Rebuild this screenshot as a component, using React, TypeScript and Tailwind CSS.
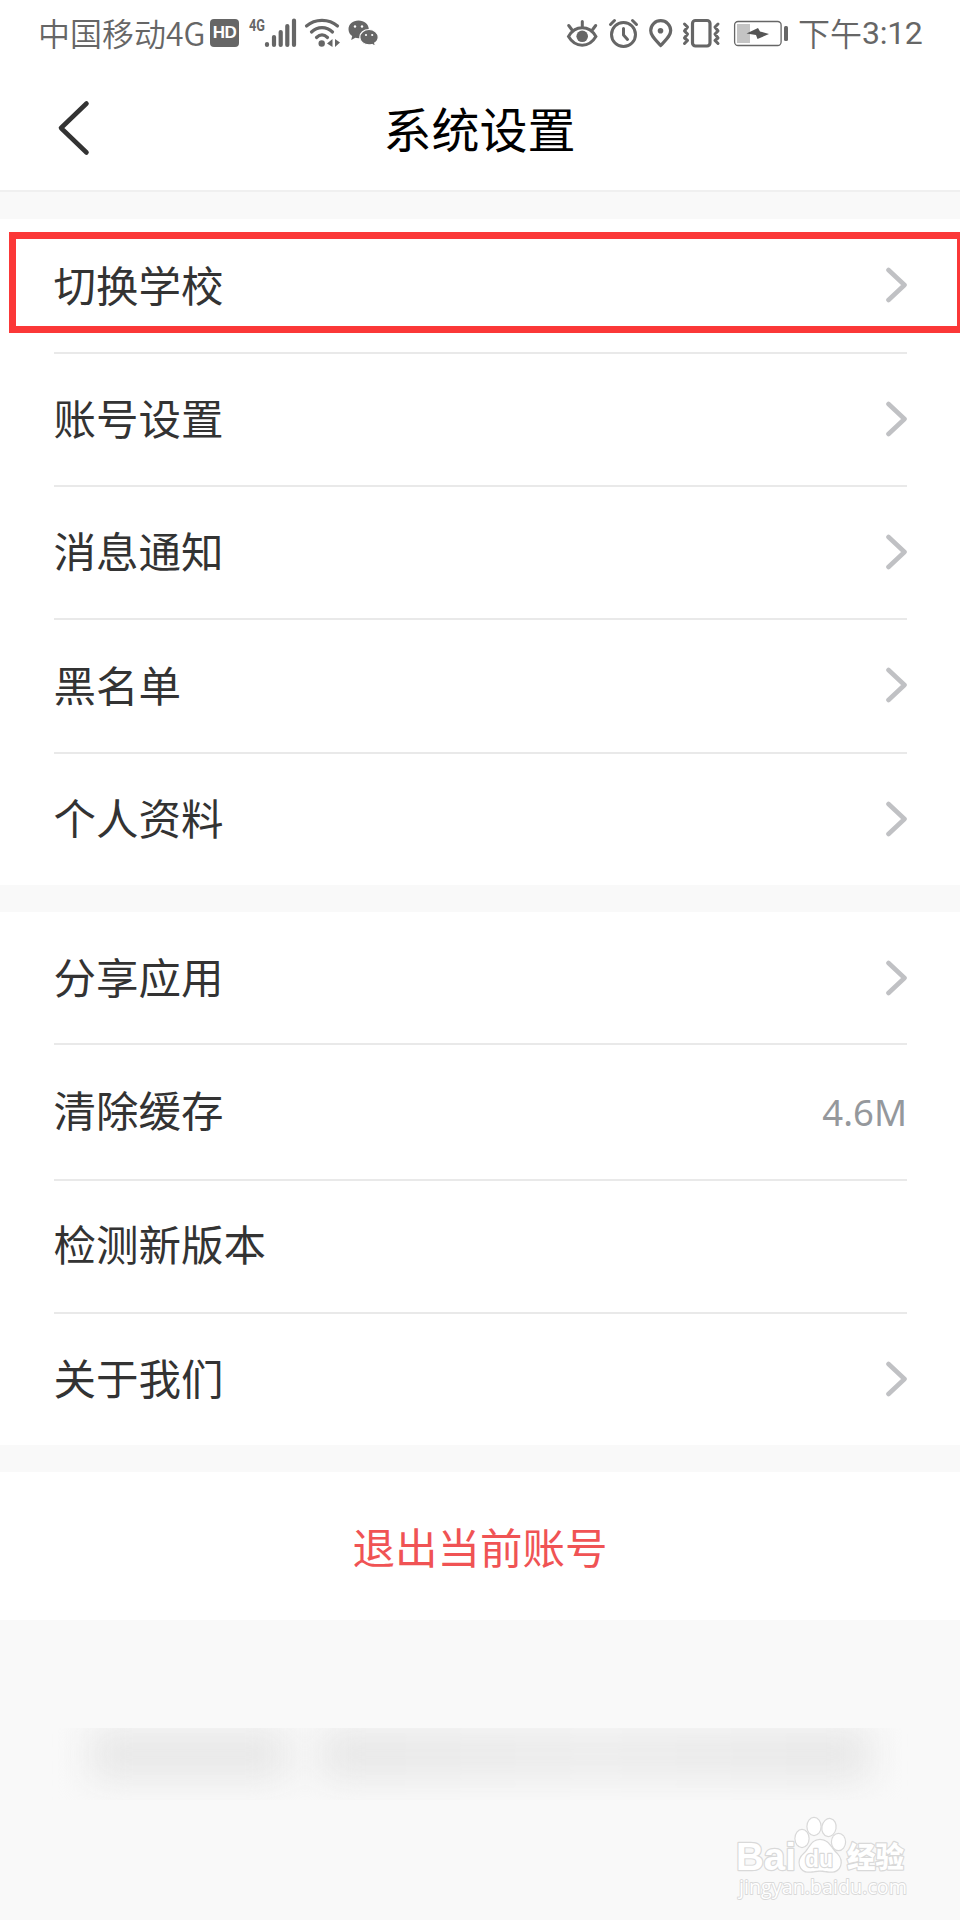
import type { ReactNode } from 'react';

interface Item {
  label: string;
  value?: string;
  arrow?: boolean;
  height: string;
}

const accountItems: Item[] = [
  { label: '切换学校', arrow: true, height: 'h-[135px] pb-px' },
  { label: '账号设置', arrow: true, height: 'h-[133px] pb-[2px]' },
  { label: '消息通知', arrow: true, height: 'h-[133px] pb-[2px]' },
  { label: '黑名单', arrow: true, height: 'h-[134px] pb-[2px]' },
  { label: '个人资料', arrow: true, height: 'h-[131px] pb-[2px]' },
];

const appItems: Item[] = [
  { label: '分享应用', arrow: true, height: 'h-[133px]' },
  { label: '清除缓存', value: '4.6M', height: 'h-[136px] pb-[3px]' },
  { label: '检测新版本', height: 'h-[133px] pb-[4px]' },
  { label: '关于我们', arrow: true, height: 'h-[131px] pb-[2px]' },
];

function StatusBar() {
  return (
    <div className="flex h-16 items-start justify-between pl-[38px] pr-[37px] pt-[17px] text-[#666]">
      <div className="flex h-[32px] items-center">
        <span className="-mt-[3px] w-[172px] whitespace-nowrap text-[32px] font-[350] leading-[32px]">中国移动4G</span>
        {/* HD badge */}
        <span className="flex h-[28px] w-[29px] items-center justify-center rounded-[4px] bg-[#666] font-['Liberation_Sans',sans-serif] text-[17px] font-bold leading-[28px] tracking-[-0.5px] text-white">
          HD
        </span>
        {/* signal */}
        <svg className="ml-[9px]" width="50" height="32" viewBox="248 16 50 32">
          <text x="249" y="30" fontSize="17" fontWeight="700" textLength="16" lengthAdjust="spacingAndGlyphs" fill="#666" className="font-[Roboto,sans-serif]">4G</text>
          <g stroke="#666" strokeWidth="4.2" strokeLinecap="round">
            <path d="M267 43v1M274 36v8M280.700 31v13M287.300 25v19M294 19.500V44" />
          </g>
        </svg>
        {/* wifi */}
        <svg className="ml-[6px]" width="38" height="32" viewBox="304 16 38 32">
          <g fill="none" stroke="#666" strokeWidth="3.200" strokeLinecap="round">
            <path d="M306.500 25c8.500-7.500 22.500-7.500 31 0M311.500 31c6-5.800 15-5.800 21 0M316.500 36.500c3.500-3.300 7.500-3.300 11 0" />
          </g>
          <circle cx="321.700" cy="42.500" r="3.200" fill="#666" />
          <path d="M327 42.500l5.500-4.500v8zM335 38v8l5-4.500z" fill="#666" />
        </svg>
        {/* wechat */}
        <svg className="ml-[6px]" width="31" height="32" viewBox="348 16 31 32">
          <path d="M358.500 19.500c-5.800 0-10 3.900-10 8.800 0 2.900 1.400 5.200 3.700 6.800l-1 4 4.200-2.300c1 .3 2 .4 3.100.4 5.800 0 10.300-4 10.300-8.900s-4.500-8.800-10.300-8.800z" fill="#666" />
          <path d="M369 28.500c-5.200 0-9.200 3.400-9.200 7.700s4 7.700 9.200 7.700c1 0 2-.1 3-.4l3.600 2-.9-3.400c2.200-1.400 3.500-3.500 3.500-5.900 0-4.300-4-7.700-9.200-7.700z" fill="#666" stroke="#fff" strokeWidth="1.200" />
          <g fill="#fff">
            <circle cx="355" cy="25.500" r="1.200" />
            <circle cx="362" cy="25.500" r="1.200" />
            <circle cx="366" cy="34" r="1.100" />
            <circle cx="372.200" cy="34" r="1.100" />
          </g>
        </svg>
      </div>

      <div className="flex h-[32px] items-center">
        {/* eye comfort */}
        <svg width="34" height="32" viewBox="566 16 34 32">
          <g fill="none" stroke="#666" strokeWidth="3" strokeLinecap="round">
            <path d="M568.500 35.500c3.500-6 8.500-8.700 13.700-8.700s10.200 2.700 13.700 8.700c-3.500 6-8.500 8.700-13.700 8.700s-10.200-2.700-13.700-8.700zM582.300 20.500v5M568.700 24.500l3 4M595.700 24.500l-3 4" />
          </g>
          <circle cx="582.200" cy="35.300" r="5.800" fill="#666" />
        </svg>
        {/* alarm */}
        <svg className="ml-[8px]" width="31" height="32" viewBox="608 16 31 32">
          <g fill="none" stroke="#666" strokeWidth="3" strokeLinecap="round" strokeLinejoin="round">
            <circle cx="623.500" cy="33.500" r="12" />
            <path d="M623.500 27.500v6.500l4 4.500M610.500 23.500l4-4M636.500 23.500l-4-4" />
          </g>
        </svg>
        {/* location */}
        <svg className="ml-[9px]" width="26" height="32" viewBox="648 16 26 32">
          <path d="M660.700 44.500c-5-5.500-10-9.500-10-15 0-5.500 4.500-9.800 10-9.800s10 4.300 10 9.800c0 5.500-5 9.500-10 15z" fill="none" stroke="#666" strokeWidth="3.200" strokeLinejoin="round" />
          <circle cx="660.500" cy="29.700" r="2.800" fill="#666" />
        </svg>
        {/* vibrate */}
        <svg className="ml-[8px]" width="40" height="32" viewBox="682 16 40 32">
          <g fill="none" stroke="#666" strokeLinecap="round" strokeLinejoin="round">
            <rect x="692.500" y="19.500" width="17.500" height="25.500" rx="3" strokeWidth="3.200" />
            <path d="M684.500 23l3 3-3 4 3 3-3 4 3 2.500-3 3M718 23l-3 3 3 4-3 3 3 4-3 2.500 3 3" strokeWidth="3" />
          </g>
        </svg>
        {/* battery, charging */}
        <svg className="ml-[11px]" width="57" height="32" viewBox="733 16 57 32">
          <rect x="734.600" y="20.500" width="46.500" height="24" rx="3.500" fill="none" stroke="#666" strokeWidth="1.300" />
          <rect x="737" y="23" width="13" height="19" fill="#c4c4c4" />
          <path d="M746.500 32.500l11.500-5.500 2 3.500 9 2.500-11.500 5-1.500-4z" fill="#555" />
          <rect x="784" y="25" width="4" height="15" rx="1.500" fill="#666" />
        </svg>
        <span className="-mt-[3px] ml-[8px] flex w-[125px] items-center whitespace-nowrap text-[32px] font-[350] leading-[32px]">
          下午<span className="mt-[3px] font-[Roboto,sans-serif] font-normal tracking-[-0.3px]">3:12</span>
        </span>
      </div>
    </div>
  );
}

function Arrow() {
  return (
    <svg width="22" height="36" viewBox="0 0 22 36">
      <path d="M3.500 3l16 15-16 15" fill="none" stroke="#c0c1c4" strokeWidth="4.600" strokeLinecap="round" strokeLinejoin="round" />
    </svg>
  );
}

function Row({ item, last }: { item: Item; last: boolean }) {
  return (
    <div className={`flex items-center justify-between ${item.height} ${last ? '' : 'border-b-2 border-[#e9e9e9]'}`}>
      <span className="pb-[3px] text-[42.5px] leading-[60px] text-[#333]">{item.label}</span>
      {item.value && (
        <span className="pt-[4px] font-['Noto_Sans',sans-serif] text-[36.5px] text-[#95989c]">{item.value}</span>
      )}
      {item.arrow && <Arrow />}
    </div>
  );
}

function Group({ items, children }: { items: Item[]; children?: ReactNode }) {
  return (
    <section className="relative bg-white pl-[53.5px] pr-[53px]">
      {items.map((item, i) => (
        <Row key={item.label} item={item} last={i === items.length - 1} />
      ))}
      {children}
    </section>
  );
}

function Watermark() {
  return (
    <svg className="absolute bottom-[14px] right-[46px]" width="184" height="94" viewBox="730 1812 184 94">
      <g fill="#fff" stroke="#d9d9d9" strokeWidth="2.400" paintOrder="stroke" strokeLinejoin="round">
        <text x="736" y="1870" fontSize="38" fontWeight="700" textLength="60" lengthAdjust="spacingAndGlyphs" className="font-['Liberation_Sans',sans-serif]">Bai</text>
        <ellipse cx="802" cy="1838.500" rx="6.500" ry="8.500" />
        <ellipse cx="814" cy="1826.500" rx="6.500" ry="8.500" />
        <ellipse cx="829" cy="1827.500" rx="6.500" ry="8.500" transform="rotate(10 829 1827.500)" />
        <ellipse cx="838.500" cy="1842" rx="6.500" ry="8" />
        <path d="M820 1840c-9 0-10 9-16 14-8 7-4 18 5 17.500 5 0 7-1 11-1s6 1 11 1c9 .5 13-10 6-17.500-6-5-8-14-17-14z" />
        <text x="805" y="1866.500" fontSize="24" fontWeight="700" textLength="28" lengthAdjust="spacingAndGlyphs" className="font-['Liberation_Sans',sans-serif]">du</text>
        <text x="847" y="1868" fontSize="29" fontWeight="900" textLength="57" lengthAdjust="spacingAndGlyphs">经验</text>
        <text x="739" y="1893.500" fontSize="20" fontWeight="500" strokeWidth="1.800" textLength="168" lengthAdjust="spacingAndGlyphs" className="font-['Open_Sans',sans-serif]">jingyan.baidu.com</text>
      </g>
    </svg>
  );
}

export default function App() {
  return (
    <div className="relative flex h-[1920px] w-[960px] flex-col overflow-hidden bg-[#f9f9f9] font-['Noto_Sans_CJK_SC',sans-serif]">
      <div className="bg-white">
        <StatusBar />
        <header className="grid h-[128px] grid-cols-[1fr_auto_1fr] items-center border-b-2 border-[#f0f0f0] pl-[57px] pr-[58px]">
          <svg className="-ml-px mt-[2px]" width="36" height="56" viewBox="57 100 36 56">
            <path d="M87.500 103.500L62 128l25.500 24.500" fill="none" stroke="#333" strokeWidth="4.600" strokeLinecap="round" strokeLinejoin="round" />
          </svg>
          <h1 className="text-[48px] leading-[60px] text-black">系统设置</h1>
        </header>
      </div>

      <main className="mt-[27px] flex flex-col gap-[27px]">
        <Group items={accountItems}>
          {/* highlight around the first row */}
          <div className="absolute left-[9px] right-0 top-[13px] h-[101px] border-[7px] border-r-[3px] border-[#fb3838]" />
        </Group>
        <Group items={appItems} />
        <button className="flex h-[148px] items-center justify-center bg-white pb-px text-[42.5px] leading-[60px] text-[#f05354]">
          退出当前账号
        </button>
      </main>

      {/* smudged hint line */}
      <div className="mx-[49px] mt-[108px] flex h-[72px] overflow-hidden">
        <div className="flex h-[52px] w-full gap-[32px] px-[40px] blur-[18px]">
          <div className="w-[200px] bg-[#e8e8e8]" />
          <div className="flex-1 bg-linear-to-r from-[#e7e7e7] via-[#ececec] to-[#e7e7e7]" />
        </div>
      </div>

      <Watermark />
    </div>
  );
}
